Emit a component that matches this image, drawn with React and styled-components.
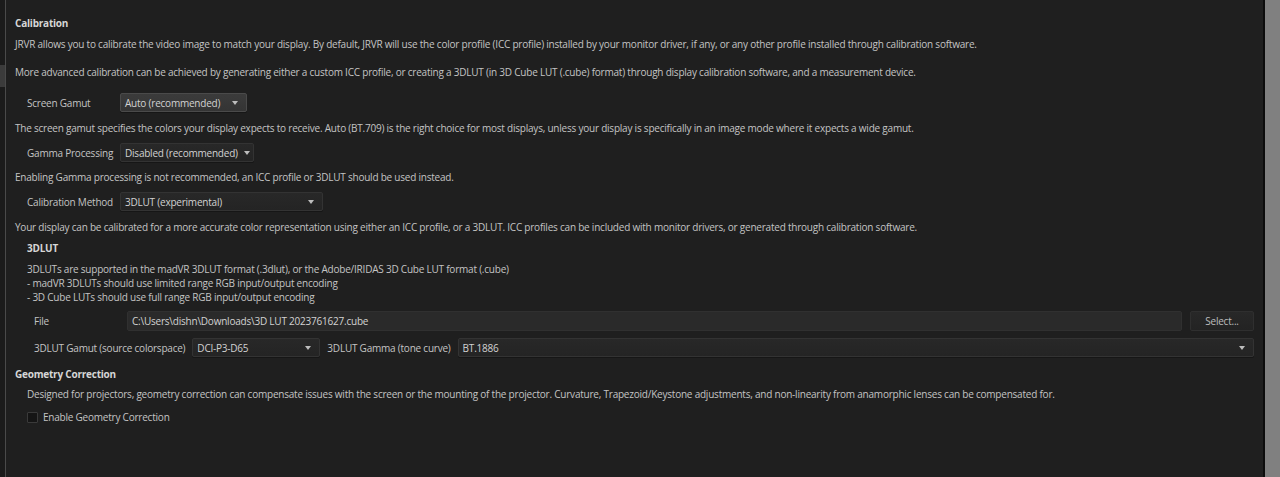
import React, { useState } from 'react';
import styled, { createGlobalStyle } from 'styled-components';

const GlobalStyle = createGlobalStyle`
  html, body {
    margin: 0;
    padding: 0;
    background: #1f1f1f;
  }
  body {
    font-family: 'Open Sans', 'Noto Sans', sans-serif;
    font-size: 10px;
    letter-spacing: -0.22px;
    color: #c4c4c4;
  }
`;

const Window = styled.div`
  display: flex;
  width: 1280px;
  height: 477px;
  overflow: hidden;
`;

const SideStrip = styled.div`
  width: 5px;
  background: #1b1b1b;
  padding-top: 65px;
  border-right: 1px solid #4a4a4a;
  flex-shrink: 0;
`;

const SideMark = styled.div`
  height: 22px;
  background: #3b3b3b;
`;

const Panel = styled.div`
  flex: 1;
  background: #1f1f1f;
  padding: 14px 9px 0 9px;
  display: flex;
  flex-direction: column;
`;

const RightEdge = styled.div`
  width: 15px;
  flex-shrink: 0;
  background: #808080;
  border-left: 2px solid #0c0c0c;
`;

const Heading = styled.div`
  font-weight: 700;
  color: #d6d6d6;
  height: 18px;
  line-height: 18px;
  margin-top: ${(p) => p.top || 0}px;
  padding-left: ${(p) => p.indent || 0}px;
`;

const Para = styled.div`
  line-height: 14px;
  margin-top: ${(p) => p.top || 0}px;
  padding-left: ${(p) => p.indent || 0}px;
`;

const Row = styled.div`
  display: flex;
  align-items: center;
  margin-top: ${(p) => p.top || 0}px;
  padding-left: ${(p) => p.indent || 0}px;
  gap: ${(p) => p.gap || 0}px;
`;

const Label = styled.span`
  width: ${(p) => (p.width ? `${p.width}px` : 'auto')};
  flex-shrink: 0;
  white-space: nowrap;
  color: #c4c4c4;
`;

const SelectBox = styled.div`
  display: flex;
  align-items: center;
  justify-content: space-between;
  box-sizing: border-box;
  height: 19px;
  width: ${(p) => (p.grow ? 'auto' : `${p.width}px`)};
  flex: ${(p) => (p.grow ? 1 : 'none')};
  padding: 0 8px 0 4px;
  white-space: nowrap;
  border: 1px solid ${(p) => (p.active ? '#4a4a4a' : '#333333')};
  border-radius: 2px;
  background: ${(p) =>
    p.active
      ? 'linear-gradient(#3b3b3b, #343434)'
      : 'linear-gradient(#282828, #242424)'};
  color: #d2d2d2;
  box-shadow: 0 1px 0 #161616;
`;

const Caret = styled.span`
  width: 0;
  height: 0;
  margin-left: 6px;
  border-left: 3px solid transparent;
  border-right: 3px solid transparent;
  border-top: 4px solid #bdbdbd;
`;

const TextField = styled.div`
  flex: 1;
  box-sizing: border-box;
  height: 20px;
  display: flex;
  align-items: center;
  padding: 0 4px;
  background: #2a2a2a;
  border: 1px solid #303030;
  border-radius: 2px;
  color: #d2d2d2;
`;

const Button = styled.button`
  box-sizing: border-box;
  width: 64px;
  height: 20px;
  margin-left: 8px;
  background: linear-gradient(#282828, #232323);
  border: 1px solid #2f2f2f;
  border-radius: 2px;
  color: #bdbdbd;
  font-family: inherit;
  font-size: 10px;
  letter-spacing: -0.22px;
  padding: 0;
`;

const CheckRow = styled.label`
  display: flex;
  align-items: center;
  gap: 5px;
  margin-top: 9px;
  padding-left: 12px;
  cursor: pointer;
`;

const CheckBox = styled.span`
  width: 11px;
  height: 11px;
  box-sizing: border-box;
  border: 1px solid #3a3a3a;
  background: ${(p) => (p.checked ? '#4a6a9a' : '#151515')};
  border-radius: 1px;
`;

const Select = ({ value, width, grow, active }) => (
  <SelectBox width={width} grow={grow} active={active}>
    <span>{value}</span>
    <Caret />
  </SelectBox>
);

export default function App() {
  const [geometry, setGeometry] = useState(false);

  return (
    <>
      <GlobalStyle />
      <Window>
        <SideStrip>
          <SideMark />
        </SideStrip>
        <Panel>
          <Heading>Calibration</Heading>
          <Para top={5}>
            JRVR allows you to calibrate the video image to match your display. By default, JRVR will use the color profile (ICC profile) installed by your monitor driver, if any, or any other profile installed through calibration software.
          </Para>
          <Para top={14}>
            More advanced calibration can be achieved by generating either a custom ICC profile, or creating a 3DLUT (in 3D Cube LUT (.cube) format) through display calibration software, and a measurement device.
          </Para>

          <Row top={14} indent={12}>
            <Label width={93}>Screen Gamut</Label>
            <Select value="Auto (recommended)" width={127} active />
          </Row>
          <Para top={9}>
            The screen gamut specifies the colors your display expects to receive. Auto (BT.709) is the right choice for most displays, unless your display is specifically in an image mode where it expects a wide gamut.
          </Para>

          <Row top={8} indent={12}>
            <Label width={93}>Gamma Processing</Label>
            <Select value="Disabled (recommended)" width={134} />
          </Row>
          <Para top={8}>
            Enabling Gamma processing is not recommended, an ICC profile or 3DLUT should be used instead.
          </Para>

          <Row top={8} indent={12}>
            <Label width={93}>Calibration Method</Label>
            <Select value="3DLUT (experimental)" width={203} />
          </Row>
          <Para top={9}>
            Your display can be calibrated for a more accurate color representation using either an ICC profile, or a 3DLUT. ICC profiles can be included with monitor drivers, or generated through calibration software.
          </Para>

          <Heading indent={12} top={5}>3DLUT</Heading>
          <Para top={5} indent={12}>
            3DLUTs are supported in the madVR 3DLUT format (.3dlut), or the Adobe/IRIDAS 3D Cube LUT format (.cube)
            <br />- madVR 3DLUTs should use limited range RGB input/output encoding
            <br />- 3D Cube LUTs should use full range RGB input/output encoding
          </Para>

          <Row top={7} indent={19}>
            <Label width={93}>File</Label>
            <TextField>C:\Users\dishn\Downloads\3D LUT 2023761627.cube</TextField>
            <Button>Select...</Button>
          </Row>

          <Row top={7} indent={19} gap={7}>
            <Label>3DLUT Gamut (source colorspace)</Label>
            <Select value="DCI-P3-D65" width={128} />
            <Label>3DLUT Gamma (tone curve)</Label>
            <Select value="BT.1886" grow />
          </Row>

          <Heading top={8}>Geometry Correction</Heading>
          <Para top={4} indent={12}>
            Designed for projectors, geometry correction can compensate issues with the screen or the mounting of the projector. Curvature, Trapezoid/Keystone adjustments, and non-linearity from anamorphic lenses can be compensated for.
          </Para>
          <CheckRow onClick={() => setGeometry(!geometry)}>
            <CheckBox checked={geometry} />
            <span>Enable Geometry Correction</span>
          </CheckRow>
        </Panel>
        <RightEdge />
      </Window>
    </>
  );
}
